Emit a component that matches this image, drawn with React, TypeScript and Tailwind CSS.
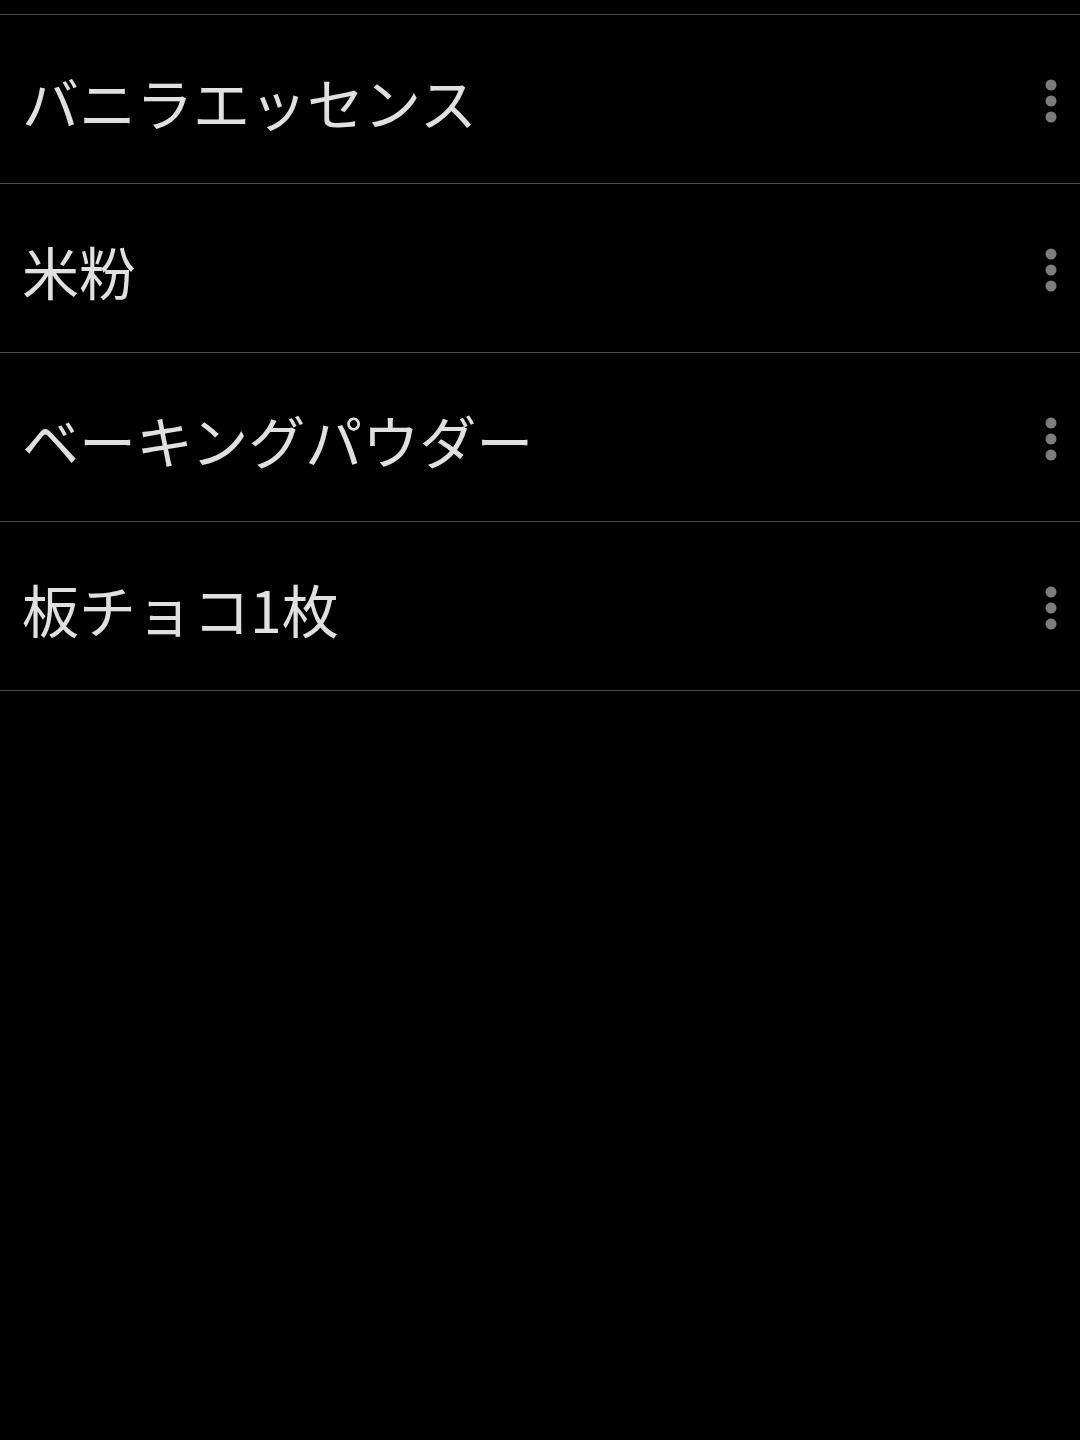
const items = ["バニラエッセンス", "米粉", "ベーキングパウダー", "板チョコ1枚"];

function MoreIcon() {
  return (
    <svg width="12" height="44" viewBox="0 0 12 44" aria-hidden="true" className="mt-[3px]">
      <circle cx="6" cy="6" r="5.5" fill="#7d7d7d" />
      <circle cx="6" cy="22" r="5.5" fill="#7d7d7d" />
      <circle cx="6" cy="38" r="5.5" fill="#7d7d7d" />
    </svg>
  );
}

export default function App() {
  return (
    <div className="min-h-[1440px] w-[1080px] bg-black pt-[14px] font-['Noto_Sans_CJK_JP','Noto_Sans',sans-serif]">
      <ul className="border-t border-[#4d4d47]">
        {items.map((name) => (
          <li
            key={name}
            className="flex h-[169px] items-center justify-between border-b border-[#4d4d47] pl-[22px] pr-[23px]"
          >
            <span className="pt-[4px] text-[57px] leading-none text-[#e0e0e0]">{name}</span>
            <MoreIcon />
          </li>
        ))}
      </ul>
    </div>
  );
}
